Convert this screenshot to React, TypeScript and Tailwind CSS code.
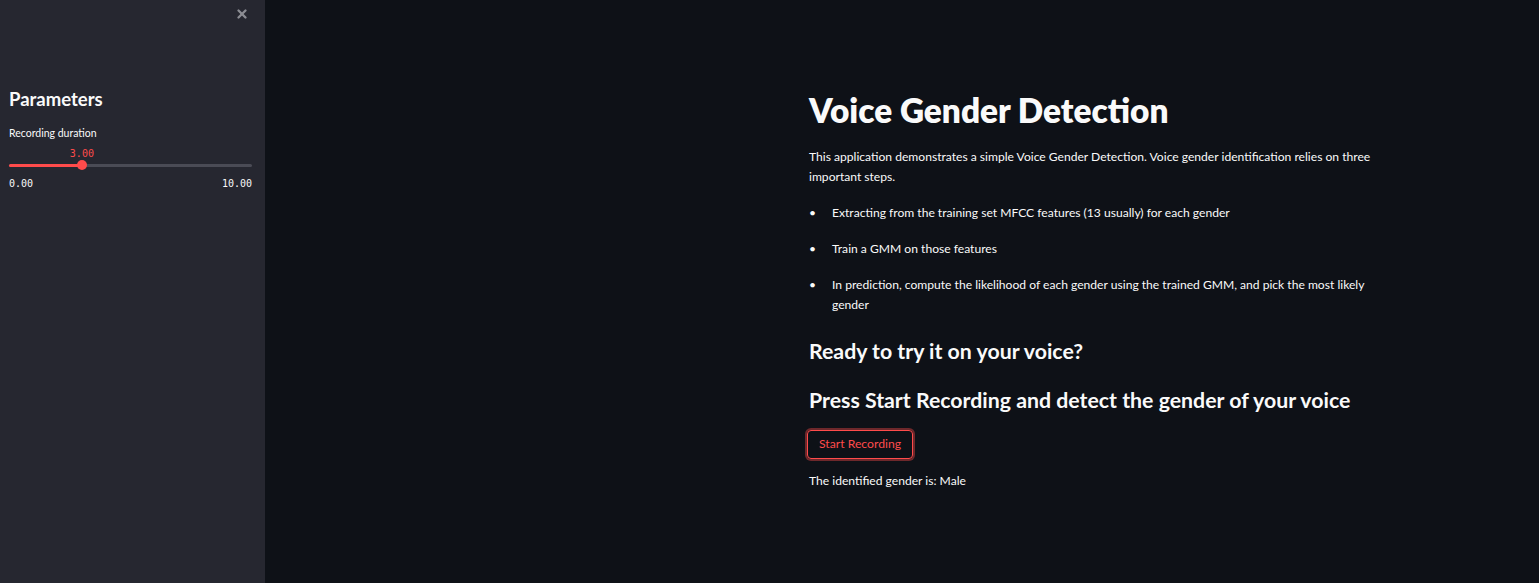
import { X } from "lucide-react";

const steps = [
  "Extracting from the training set MFCC features (13 usually) for each gender",
  "Train a GMM on those features",
  "In prediction, compute the likelihood of each gender using the trained GMM, and pick the most likely gender",
];

function Slider() {
  const value = 3;
  const pct = (value / 10) * 100;
  return (
    <div className="mt-[6px]">
      <div className="relative h-[14px] font-['DejaVu_Sans_Mono',monospace] text-[10px] text-[#ff4b4b]">
        <span
          className="absolute top-0 -translate-x-1/2"
          style={{ left: `${pct}%` }}
        >
          3.00
        </span>
      </div>
      <div className="relative h-[10px]">
        <div className="absolute left-0 right-0 top-[4px] h-[3px] rounded bg-[#4a4b55]" />
        <div
          className="absolute left-0 top-[4px] h-[3px] rounded bg-[#ff4b4b]"
          style={{ width: `${pct}%` }}
        />
        <div
          className="absolute top-0 h-[10px] w-[10px] -translate-x-1/2 rounded-full bg-[#ff4b4b]"
          style={{ left: `${pct}%` }}
        />
      </div>
      <div className="mt-[6px] flex justify-between font-['DejaVu_Sans_Mono',monospace] text-[10px] text-[#fafafa]">
        <span>0.00</span>
        <span>10.00</span>
      </div>
    </div>
  );
}

export default function App() {
  return (
    <div className="flex h-[583px] w-full font-['Lato',sans-serif] text-[#fafafa]">
      {/* Sidebar */}
      <aside className="relative w-[265px] shrink-0 bg-[#262730] pl-[9px] pr-[13px]">
        <button className="absolute right-[16px] top-[7px] text-[#8b8c93]">
          <X size={14} strokeWidth={4} />
        </button>
        <h2 className="mt-[88px] text-[18.5px] font-bold leading-[22px]">Parameters</h2>
        <p className="mt-[16px] text-[10.5px] leading-[14px]">Recording duration</p>
        <Slider />
      </aside>

      {/* Main */}
      <main className="flex-1 bg-[#0e1117] pl-[544px]">
        <div className="w-[584px]">
          <h1 className="mt-[90px] text-[33.4px] font-extrabold leading-[40px]">
            Voice Gender Detection
          </h1>
          <p className="mt-[17px] text-[12.1px] leading-[20px]">
            This application demonstrates a simple Voice Gender Detection. Voice gender
            identification relies on three important steps.
          </p>
          <ul className="mt-[6px] text-[12.1px] leading-[20px]">
            {steps.map((s) => (
              <li key={s} className="mt-[16px] flex">
                <span className="w-[23px] shrink-0">•</span>
                <span>{s}</span>
              </li>
            ))}
          </ul>
          <h3 className="mt-[22px] text-[21.3px] font-bold leading-[28px]">
            Ready to try it on your voice?
          </h3>
          <h3 className="mt-[21px] text-[21.3px] font-bold leading-[28px]">
            Press Start Recording and detect the gender of your voice
          </h3>
          <button className="ml-[-2px] mt-[16px] h-[29px] rounded-[4px] border border-[#ff4b4b] px-[11px] text-[12.2px] text-[#ff4b4b] shadow-[0_0_0_2px_rgba(255,75,75,0.4)]">
            Start Recording
          </button>
          <p className="mt-[12px] text-[12.1px] leading-[20px]">The identified gender is: Male</p>
        </div>
      </main>
    </div>
  );
}
